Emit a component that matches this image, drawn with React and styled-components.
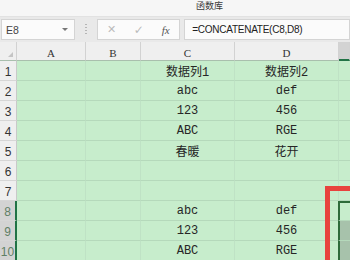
import styled, { createGlobalStyle } from "styled-components";

const GlobalStyle = createGlobalStyle`
  html, body {
    margin: 0;
    padding: 0;
    overflow: hidden;
    background: #f0f0f0;
  }
`;

const Page = styled.div`
  position: relative;
  width: 350px;
  height: 260px;
  overflow: hidden;
  font-family: "Liberation Sans", "Noto Sans CJK SC", sans-serif;
`;

const TitleBar = styled.div`
  height: 16px;
  background: #f6f6f6;
  border-bottom: 1px solid #e2e2e2;
  display: flex;
  padding-left: 196px;
  align-items: flex-start;
`;

const TitleText = styled.span`
  font-family: "Noto Sans CJK SC", sans-serif;
  font-size: 9px;
  line-height: 11px;
  color: #3a3a3a;
`;

const FormulaBar = styled.div`
  height: 25px;
  background: #e9e9e9;
  display: flex;
  align-items: center;
  padding-left: 1px;
  box-sizing: border-box;
`;

const Box = styled.div`
  height: 21px;
  box-sizing: border-box;
  background: #fbfbfb;
  border: 1px solid #d4d4d4;
  display: flex;
  align-items: center;
  width: ${(p) => p.$w};
  margin-right: ${(p) => p.$mr || "0px"};
  padding: 0 ${(p) => p.$pad || "0px"};
`;

const NameText = styled.span`
  font-size: 10.5px;
  color: #444;
  flex: 1;
`;

const Arrow = styled.span`
  width: 0;
  height: 0;
  border-left: 3px solid transparent;
  border-right: 3px solid transparent;
  border-top: 3px solid #777;
  margin-right: 2px;
`;

const Grip = styled.div`
  width: 2px;
  height: 11px;
  margin: 0 10px 0 10px;
  background: repeating-linear-gradient(to bottom, #b5b5b5 0 1px, transparent 1px 3px);
`;

const IconSlot = styled.span`
  width: 27px;
  text-align: center;
  font-size: ${(p) => p.$size || "12px"};
  color: ${(p) => p.$color || "#bbb"};
  font-style: ${(p) => (p.$italic ? "italic" : "normal")};
  font-family: ${(p) => (p.$serif ? '"Liberation Serif", serif' : '"DejaVu Sans", sans-serif')};
`;

const FormulaText = styled.span`
  font-size: 10px;
  letter-spacing: -0.25px;
  color: #222;
`;

const Sheet = styled.div`
  display: grid;
  grid-template-columns: 17px 69px 55px 94px 104px 1fr;
  grid-template-rows: 19px;
  grid-auto-rows: 20px;
  background: #c7edcc;
`;

const Corner = styled.div`
  background: #efefef;
  border-right: 1px solid #d2d2d2;
  border-bottom: 1px solid #a9bfad;
  box-sizing: border-box;
  position: relative;
  &::after {
    content: "";
    position: absolute;
    right: 3px;
    bottom: 3px;
    border-left: 5px solid transparent;
    border-bottom: 5px solid #c4c4c4;
  }
`;

const ColHead = styled.div`
  background: ${(p) => (p.$sel ? "#d3d3d3" : "#efefef")};
  border-right: 1px solid #d2d2d2;
  border-bottom: ${(p) => (p.$sel ? "2px solid #217346" : "1px solid #a9bfad")};
  box-sizing: border-box;
  display: flex;
  justify-content: center;
  align-items: flex-end;
  padding-bottom: 1px;
  font-family: "Liberation Serif", serif;
  font-size: 11px;
  color: #333;
`;

const RowHead = styled.div`
  background: ${(p) => (p.$sel ? "#d3d3d3" : "#efefef")};
  border-right: ${(p) => (p.$sel ? "2px solid #217346" : "1px solid #c9c9c9")};
  border-bottom: 1px solid #d6d6d6;
  box-sizing: border-box;
  display: flex;
  justify-content: center;
  align-items: flex-end;
  padding-bottom: 1px;
  font-size: 12px;
  color: ${(p) => (p.$sel ? "#5f7f65" : "#333")};
`;

const Cell = styled.div`
  border-right: 1px solid #bfe2c5;
  border-bottom: 1px solid #b5d9bb;
  box-sizing: border-box;
  display: flex;
  justify-content: center;
  align-items: center;
  font-family: "Liberation Mono", "Noto Sans CJK SC", monospace;
  font-size: 12px;
  color: #262626;
  white-space: nowrap;
`;

const ECell = styled.div`
  box-sizing: border-box;
  border-bottom: 1px solid #b5d9bb;
  background: ${(p) => (p.$range ? "#a7c2ab" : "#c7edcc")};
  border-left: ${(p) => (p.$sel ? "2px solid #2e6b3a" : "none")};
  border-top: ${(p) => (p.$active ? "2px solid #2e6b3a" : "none")};
  margin-left: ${(p) => (p.$sel ? "-1px" : "0")};
`;

const RedMark = styled.div`
  position: absolute;
  left: 325px;
  top: 186px;
  width: 60px;
  height: 100px;
  border: 5px solid #e8423d;
  box-sizing: border-box;
  pointer-events: none;
`;

const rows = [
  ["数据列1", "数据列2"],
  ["abc", "def"],
  ["123", "456"],
  ["ABC", "RGE"],
  ["春暖", "花开"],
  ["", ""],
  ["", ""],
  ["abc", "def"],
  ["123", "456"],
  ["ABC", "RGE"],
];

export default function App() {
  return (
    <Page>
      <GlobalStyle />
      <TitleBar>
        <TitleText>函数库</TitleText>
      </TitleBar>
      <FormulaBar>
        <Box $w="76px" $pad="4px">
          <NameText>E8</NameText>
          <Arrow />
        </Box>
        <Grip />
        <Box $w="83px" $mr="4px" $pad="0px">
          <IconSlot $size="11px">✕</IconSlot>
          <IconSlot $size="12px">✓</IconSlot>
          <IconSlot $size="11px" $color="#555" $italic $serif>
            fx
          </IconSlot>
        </Box>
        <Box $w="170px" $pad="7px">
          <FormulaText>=CONCATENATE(C8,D8)</FormulaText>
        </Box>
      </FormulaBar>
      <Sheet>
        <Corner />
        <ColHead>A</ColHead>
        <ColHead>B</ColHead>
        <ColHead>C</ColHead>
        <ColHead>D</ColHead>
        <ColHead $sel />
        {rows.map((r, i) => {
          const n = i + 1;
          const sel = n >= 8;
          return [
            <RowHead key={`h${n}`} $sel={sel}>
              {n}
            </RowHead>,
            <Cell key={`a${n}`} />,
            <Cell key={`b${n}`} />,
            <Cell key={`c${n}`}>{r[0]}</Cell>,
            <Cell key={`d${n}`}>{r[1]}</Cell>,
            <ECell key={`e${n}`} $sel={sel} $active={n === 8} $range={n > 8} />,
          ];
        })}
      </Sheet>
      <RedMark />
    </Page>
  );
}
